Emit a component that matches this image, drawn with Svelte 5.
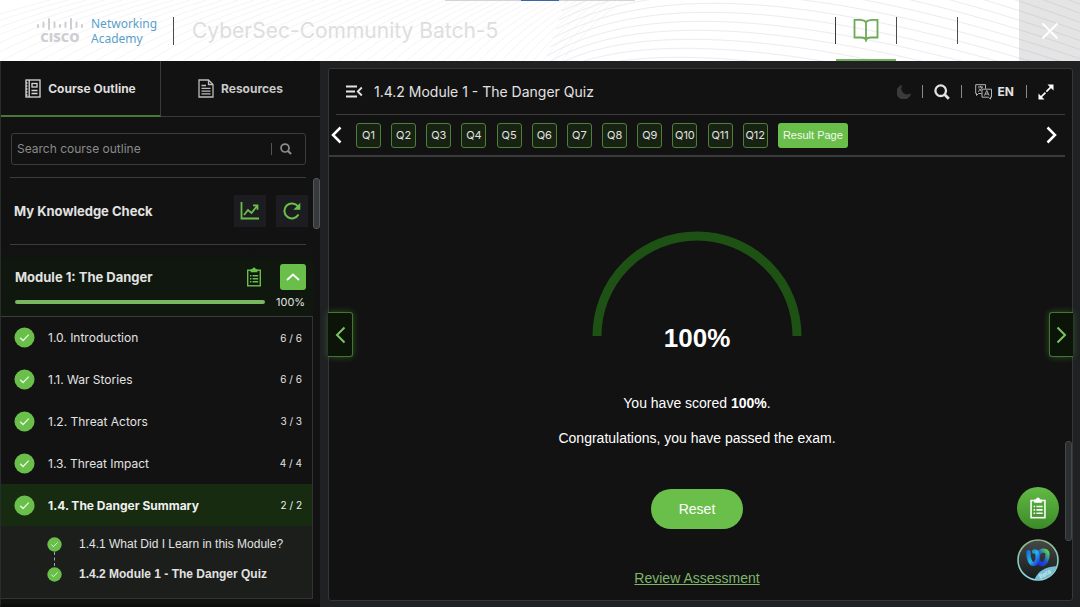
<script>
  const rows = [
    { label: '1.0. Introduction', count: '6 / 6' },
    { label: '1.1. War Stories', count: '6 / 6' },
    { label: '1.2. Threat Actors', count: '3 / 3' },
    { label: '1.3. Threat Impact', count: '4 / 4' },
    { label: '1.4. The Danger Summary', count: '2 / 2', active: true }
  ];
  const topics = [
    { label: '1.4.1 What Did I Learn in this Module?' },
    { label: '1.4.2 Module 1 - The Danger Quiz', active: true }
  ];
  const questions = Array.from({ length: 12 }, (_, i) => `Q${i + 1}`);
  // Decorative contour lines behind the header
  const rising = Array.from({ length: 46 }, (_, i) => {
    const x = -120 + i * 21 - i * i * 0.13;
    return `M${x} 61Q${x + 70 - i} 26 ${x + 170 - i * 2.4} 0`;
  });
  const falling = Array.from({ length: 22 }, (_, i) => {
    const y = 60 - i * 9;
    return `M${535 + i * 3} ${y + 32}C${600 + i * 8} ${y - 18} ${760 + i * 6} ${y - 22} 1090 ${y + 74}`;
  });
</script>

{#snippet check()}
  <svg class="check" viewBox="0 0 22 22" aria-hidden="true">
    <circle cx="11" cy="11" r="10.5" fill="#6abf4b" />
    <path d="M6.5 11.2l3 3 6-6.2" fill="none" stroke="#e9f7e2" stroke-width="1.3" />
  </svg>
{/snippet}

{#snippet clipboard()}
  <svg viewBox="0 0 16 20" aria-hidden="true" fill="none" stroke="currentColor">
    <rect x="1.7" y="3.2" width="12.6" height="15.6" stroke-width="1.4" />
    <path d="M4.5 2.2h1.7a1.8 1.8 0 0 1 3.6 0h1.7v3h-7z" fill="currentColor" stroke="none" />
    <path d="M4 8.7h1.4M6.6 8.7h5.6M4 11.7h1.4M6.6 11.7h5.6M4 14.7h1.4M6.6 14.7h5.6" stroke-width="1.4" />
  </svg>
{/snippet}

{#snippet magnifier()}
  <svg viewBox="0 0 16 16" aria-hidden="true" fill="none" stroke="currentColor">
    <circle cx="6.7" cy="6.7" r="5.3" stroke-width="2.3" />
    <path d="M10.6 10.6l4.2 4.2" stroke-width="2.8" />
  </svg>
{/snippet}

<div class="page">
  <header>
    <svg class="waves" viewBox="0 0 1080 61" preserveAspectRatio="none" aria-hidden="true" fill="none">
      {#each rising as d}<path {d} stroke="#f5f5f7" />{/each}
      {#each falling as d}<path {d} stroke="#ececf1" />{/each}
    </svg>
    <div class="topbar"><span></span></div>
    <div class="brand">
      <div class="cisco">
        <svg viewBox="0 0 48 14" aria-hidden="true" stroke="#cfcfd3" stroke-width="2" stroke-linecap="round">
          <path d="M2 8v2M7.500 5.500v4.500M13 2v10M18.500 5.500v4.500M24 8v2M29.500 5.500v4.500M35 2v10M40.500 5.500v4.500M46 8v2" />
        </svg>
        <b>CISCO</b>
      </div>
      <div class="academy"><div>Networking</div><div>Academy</div></div>
      <i class="rule"></i>
      <h1>CyberSec-Community Batch-5</h1>
    </div>
    <nav class="tools" aria-label="Course tools">
      <a class="book" href="#course" aria-label="Course">
        <svg viewBox="0 0 26 24" fill="none" stroke="#6cab55" stroke-width="1.8" aria-hidden="true">
          <path d="M13 4.200C11.500 2.300 9 1.900 6.500 1.900H1.500v17.600h7c2.500 0 4 .4 4.500 2.200.500-1.800 2-2.200 4.500-2.200h7V1.900h-5C17 1.900 14.500 2.300 13 4.200zV23.500" />
        </svg>
      </a>
      <span class="slot"></span>
      <span class="slot wide"></span>
      <button class="close" aria-label="Close">
        <svg viewBox="0 0 18 18" stroke="#fff" stroke-width="2" aria-hidden="true"><path d="M1.500 1.500l15 15M16.500 1.500l-15 15" /></svg>
      </button>
    </nav>
  </header>

  <div class="body">
    <aside>
      <div class="tabs">
        <button class="tab on">
          <svg viewBox="0 0 16 19" fill="none" stroke="#d8d8d8" stroke-width="1.3" aria-hidden="true">
            <rect x="1" y="1" width="14" height="17" />
            <path d="M4.200 1v17M6.500 11.500h6M6.500 14.500h6M1 4h1.500M1 7h1.500M1 10h1.500M1 13h1.500M1 16h1.500" />
            <rect x="7" y="4.500" width="5" height="3.500" />
          </svg>
          Course Outline
        </button>
        <button class="tab">
          <svg viewBox="0 0 16 19" fill="none" stroke="#bdbdbd" stroke-width="1.3" aria-hidden="true">
            <path d="M1 1h9.500L15 5.500V18H1zM10.500 1v4.500H15M3.500 6.500h4.500M3.500 9.300h9M3.500 12.100h9M3.500 14.900h9" />
          </svg>
          Resources
        </button>
      </div>

      <div class="scroll">
        <div class="search">
          <input type="text" placeholder="Search course outline" aria-label="Search course outline" />
          <i></i>
          <button aria-label="Search">{@render magnifier()}</button>
        </div>

        <div class="knowledge">
          <h2>My Knowledge Check</h2>
          <button aria-label="Progress">
            <svg viewBox="0 0 20 18" fill="none" stroke="#6abf4b" stroke-width="1.8" aria-hidden="true">
              <path d="M1.500 0v16.500H19M4 13l4-5 3.500 3L17 4M13 3.300h4.500v4.500" />
            </svg>
          </button>
          <button aria-label="Refresh">
            <svg viewBox="0 0 20 18" fill="none" stroke="#6abf4b" stroke-width="2" aria-hidden="true">
              <path d="M16.500 12.500A7.500 7.500 0 1 1 16 4.500" />
              <path d="M18.300.8v7h-7z" fill="#6abf4b" stroke="none" />
            </svg>
          </button>
        </div>

        <div class="module">
          <div class="modtitle">
            <h2>Module 1: The Danger</h2>
            <span class="clip">{@render clipboard()}</span>
            <button aria-label="Collapse module">
              <svg viewBox="0 0 14 8" fill="none" stroke="#fff" stroke-width="1.800" aria-hidden="true"><path d="M1 7l6-5.500L13 7" /></svg>
            </button>
          </div>
          <div class="progress"><span></span><em>100%</em></div>
        </div>

        <div class="list">
          {#each rows as row}
            <a class="row" class:active={row.active} href="#section">
              {@render check()}<span>{row.label}</span><em>{row.count}</em>
            </a>
          {/each}
          <div class="topics">
            {#each topics as topic}
              <a class="topic" class:active={topic.active} href="#topic">
                {@render check()}<span>{topic.label}</span>
              </a>
            {/each}
          </div>
        </div>
      </div>
      <div class="thumb side"></div>
    </aside>

    <main>
      <div class="titlebar">
        <button class="fold" aria-label="Hide outline">
          <svg viewBox="0 0 17 13" fill="none" stroke="#e4e4e4" stroke-width="1.800" aria-hidden="true">
            <path d="M0 1.500h11M0 6.500h9M0 11.500h11M15.800 2.500l-4 4 4 4" />
          </svg>
        </button>
        <h2>1.4.2 Module 1 - The Danger Quiz</h2>
        <div class="actions">
          <button aria-label="Dark mode">
            <svg width="14" height="14" viewBox="0 0 14 14" aria-hidden="true"><path d="M4.500.5a7 7 0 1 0 9 8.600A6.500 6.500 0 0 1 4.500.5z" fill="#3b3b3b" stroke="#3b3b3b" /></svg>
          </button>
          <i></i>
          <button class="find" aria-label="Search">{@render magnifier()}</button>
          <i></i>
          <button class="lang">
            <svg width="18" height="16" viewBox="0 0 18 16" fill="none" stroke="#b4b4b4" aria-hidden="true">
              <path d="M6.500 9.500H3.500L1.500 11.500V9.500H.700V.700h9.800v4M7 5.200h9.500v8H15.500v2l-2-2H7z" />
              <path d="M3 3h5M5.500 1.800V3M7 3C6.500 5 5 6.500 3 7.500M4 4.500c.5 1 1.500 2 2.500 2.500M9.500 11.500l2.300-5 2.300 5M10.300 10h3" />
            </svg>
            EN
          </button>
          <i></i>
          <button aria-label="Full screen">
            <svg width="16" height="16" viewBox="0 0 16 16" aria-hidden="true" fill="#fff">
              <path d="M15.500.5v6L9.500.500zM.5 15.500v-6l6 6z" />
              <path d="M2.500 13.500l11-11" stroke="#fff" stroke-width="1.700" stroke-dasharray="7 1.300" />
            </svg>
          </button>
        </div>
      </div>

      <div class="quizbar">
        <button class="step" aria-label="Previous questions">
          <svg viewBox="0 0 11 18" fill="none" stroke="#fff" stroke-width="2.500" aria-hidden="true"><path d="M9.500 1.500L2 9l7.500 7.500" /></svg>
        </button>
        <div class="questions">
          {#each questions as q}<button class="q">{q}</button>{/each}
          <button class="resultpage">Result Page</button>
        </div>
        <button class="step" aria-label="Next questions">
          <svg viewBox="0 0 11 18" fill="none" stroke="#fff" stroke-width="2.500" aria-hidden="true"><path d="M1.500 1.500L9 9l-7.500 7.500" /></svg>
        </button>
      </div>

      <section class="result">
        <svg class="arc" viewBox="0 0 210 105" fill="none" aria-hidden="true">
          <path d="M5 105a100 100 0 0 1 200 0" stroke="#1e5214" stroke-width="9" />
        </svg>
        <strong class="score">100%</strong>
        <p>You have scored <b>100%</b>.</p>
        <p>Congratulations, you have passed the exam.</p>
        <button class="reset">Reset</button>
        <a href="#review">Review Assessment</a>
      </section>

      <button class="pager prev" aria-label="Previous page">
        <svg viewBox="0 0 11 18" fill="none" stroke="#7cc561" stroke-width="2" aria-hidden="true"><path d="M9.500 1.500L2 9l7.500 7.500" /></svg>
      </button>
      <button class="pager next" aria-label="Next page">
        <svg viewBox="0 0 11 18" fill="none" stroke="#7cc561" stroke-width="2" aria-hidden="true"><path d="M1.500 1.500L9 9l-7.500 7.500" /></svg>
      </button>
      <div class="floating">
        <button class="tasks" aria-label="Tasks">{@render clipboard()}</button>
        <button class="webex" aria-label="Webex">
          <svg viewBox="0 0 42 42" aria-hidden="true" fill="none">
            <defs>
              <linearGradient id="rim" x1="0" y1="0" x2="0" y2="1"><stop stop-color="#8fb98a" /><stop offset="1" stop-color="#8fd8e6" /></linearGradient>
              <linearGradient id="disc" x1="0" y1="0" x2="0" y2="1"><stop stop-color="#454947" /><stop offset="1" stop-color="#16191b" /></linearGradient>
              <linearGradient id="wl" x1="0" y1="0" x2="1" y2="1"><stop stop-color="#1674e0" /><stop offset=".5" stop-color="#24b7e8" /><stop offset="1" stop-color="#1b3de0" /></linearGradient>
              <linearGradient id="wr" x1="1" y1="0" x2="0" y2="1"><stop stop-color="#5bd84e" /><stop offset=".5" stop-color="#1c4fe0" /><stop offset="1" stop-color="#1a2bd0" /></linearGradient>
              <clipPath id="round"><circle cx="21" cy="21" r="19.500" /></clipPath>
            </defs>
            <circle cx="21" cy="21" r="20" fill="url(#disc)" stroke="url(#rim)" stroke-width="1.600" />
            <path d="M22 14c2-3 8-3.500 8.500 1 .3 5-2.500 11-6.500 10-2.500-.800-3-4-4-7" stroke="url(#wr)" stroke-width="4.200" stroke-linecap="round" />
            <path d="M11.500 13c-.5 5 1.500 12 5 12 3.500 0 5-6 4-10-.5-2-2-3-3.500-2.500" stroke="url(#wl)" stroke-width="4.200" stroke-linecap="round" />
            <path d="M17 42c3-9 10-14.500 25-15v15z" fill="#79bfd2" clip-path="url(#round)" />
            <text x="28" y="37" font-size="6" font-family="Inter, sans-serif" fill="#dff3f8" text-anchor="middle" transform="rotate(-28 28 35)">Beta</text>
          </svg>
        </button>
      </div>
      <div class="thumb content"></div>
    </main>
  </div>
</div>

<style>
  :global(body) { margin: 0; background: #1c1e20; }
  * { box-sizing: border-box; }
  button { margin: 0; padding: 0; border: 0; background: none; color: inherit; font: inherit; cursor: pointer; }
  a { color: inherit; text-decoration: none; }
  h1, h2, p { margin: 0; font-weight: 400; }
  h2 { font-size: 13px; }
  em { font-style: normal; }
  svg { display: block; }
  .page { min-height: 100vh; display: flex; flex-direction: column; font-family: Inter, "Liberation Sans", sans-serif; font-size: 12px; color: #e2e2e2; }

  header { position: relative; display: flex; justify-content: space-between; height: 61px; background: #fff; }
  .waves { position: absolute; inset: 0; width: 100%; height: 100%; }
  .topbar { position: absolute; top: 0; left: 50%; width: 190px; height: 1px; margin-left: -95px; background: #d4d4d6; }
  .topbar span { display: block; width: 38px; height: 1px; margin: 0 auto; background: #3a66a8; }
  .brand { position: relative; display: flex; align-items: center; padding-left: 36px; }
  .cisco { width: 48px; text-align: center; font: 700 13px/13px "Open Sans", sans-serif; color: #cfcfd3; }
  .cisco svg { width: 48px; height: 14px; }
  .cisco b { display: block; }
  .academy { margin-left: 7px; font: 12px/15px "Noto Sans", sans-serif; color: #5a9fcb; width: 68px; }
  .rule { width: 1px; height: 28px; margin: 0 18px 0 14px; background: #4a4a4c; }
  h1 { font-size: 21px; color: #dedee0; white-space: nowrap; }
  .tools { position: relative; display: flex; align-items: center; }
  .book { display: flex; align-items: center; justify-content: center; align-self: stretch; width: 60px; border-bottom: 2px solid #74b35e; position: relative; }
  .book::before { content: ""; position: absolute; left: -1px; top: 17px; height: 27px; width: 1px; background: #3a3a3a; }
  .book svg { width: 26px; height: 24px; }
  .slot { width: 61px; height: 27px; border-left: 1px solid #4c4c4c; }
  .slot.wide { width: 62px; }
  .close { align-self: stretch; width: 61px; background: rgba(120, 120, 124, 0.2); display: grid; place-items: center; }
  .close svg { width: 18px; height: 18px; }

  .body { flex: 1; display: flex; background: #1f2123; }
  aside { position: relative; width: 320px; flex: none; background: #121212; border-left: 1px solid #2a2c2c; border-bottom: 4px solid #0d0d0e; }
  .tabs { display: flex; height: 56px; }
  .tab { flex: 1; display: flex; align-items: center; justify-content: center; gap: 7px; font-weight: 700; color: #c9c9c9; border-bottom: 1px solid #3a3a3a; }
  .tab.on { color: #dedede; border-right: 1px solid #3a3a3a; border-bottom: 2px solid #497a35; }
  .tab svg { width: 16px; height: 19px; }
  .scroll { padding-right: 7px; }
  .search { display: flex; align-items: center; height: 32px; margin: 16px 7px 0 10px; padding: 0 13px 1px 5px; border: 1px solid #3c3c3c; border-radius: 3px; }
  .search input { flex: 1; min-width: 0; padding: 0; border: 0; outline: 0; background: none; font: inherit; color: #ddd; }
  .search input::placeholder { color: #8a8a8a; opacity: 1; }
  .search i { width: 1px; height: 12px; background: #555; margin-right: 8px; }
  .search button { color: #8c8c8c; }
  .search svg { width: 12px; height: 12px; }
  .knowledge { display: flex; align-items: center; gap: 10px; height: 68px; margin: 12px 7px 0 9px; padding-left: 4px; border-top: 1px solid #3c3c3c; border-bottom: 1px solid #3c3c3c; }
  .knowledge h2 { flex: 1; font-weight: 700; }
  .knowledge button { width: 32px; height: 32px; background: #1d1c20; display: grid; place-items: center; }
  .knowledge button:last-child { margin-right: -2px; }
  .knowledge svg { width: 20px; height: 18px; }
  .module { margin-top: 8px; padding: 10px 7px 0 14px; height: 64px; background: linear-gradient(#121212, #0f170e 8px); border-bottom: 1px solid #3c3c3c; }
  .modtitle { display: flex; align-items: center; height: 28px; }
  .modtitle h2 { flex: 1; font-weight: 700; }
  .clip { color: #6abf4b; margin-right: 18px; }
  .clip :global(svg) { width: 16px; height: 20px; }
  .modtitle button { width: 26px; height: 26px; border-radius: 3px; background: #6abf4b; display: grid; place-items: center; }
  .modtitle button svg { width: 14px; height: 8px; }
  .progress { display: flex; align-items: center; gap: 11px; height: 22px; }
  .progress span { flex: 1; height: 4px; border-radius: 2px; background: #78b85e; }
  .progress em { font-size: 11px; width: 30px; }
  .list { border-right: 1px solid #333; border-bottom: 1px solid #333; }
  .row { display: flex; align-items: center; gap: 13px; height: 42px; padding: 0 10px 0 13px; }
  .row:first-child { height: 41px; }
  .row span { flex: 1; }
  .row em { font-size: 10px; }
  .row.active { background: #172b10; color: #f0f0f0; }
  .row.active span { font-weight: 700; }
  .check { width: 21px; height: 21px; flex: none; }
  .topics { background: #1b1e1b; padding: 3px 0 9px; }
  .topic { position: relative; display: flex; align-items: center; gap: 17px; height: 30px; padding-left: 46px; font-family: "Liberation Sans", Arial, sans-serif; }
  .topic .check { width: 15px; height: 15px; }
  .topic.active { font-weight: 700; }
  .topic.active::before { content: ""; position: absolute; left: 53px; top: -7px; height: 14px; border-left: 1px dashed #a5a5a5; }
  .thumb { position: absolute; width: 7px; border: 1px solid #55585a; border-radius: 3px; background: #38393b; }
  .thumb.side { right: 0; top: 117px; height: 51px; }
  .thumb.content { right: 0; top: 372px; height: 100px; background: #2c2f31; border-color: #45484a; }

  main { position: relative; flex: 1; min-width: 0; margin: 7px 7px 7px 8px; background: #121212; border: 1px solid #343638; border-radius: 3px; }
  .titlebar { display: flex; align-items: center; height: 46px; margin: 0 7px; padding: 0 11px 0 10px; border-bottom: 1px solid #3c3c3c; }
  .fold svg { width: 17px; height: 13px; }
  .titlebar h2 { flex: 1; margin-left: 11px; font-size: 14px; }
  .actions { display: flex; align-items: center; gap: 11px; }
  .actions i { width: 1px; height: 13px; background: #8a8a8a; }
  .find :global(svg) { width: 16px; height: 16px; }
  .lang { display: flex; align-items: center; gap: 5px; margin: 0 1px 0 2px; font-weight: 700; }
  .quizbar { display: flex; align-items: center; height: 42px; margin-right: 7px; padding: 0 8px 0 2px; border-bottom: 2px solid #3a3a3a; }
  .step svg { width: 11px; height: 18px; }
  .questions { display: flex; flex: 1; max-width: 492px; margin: 0 auto 0 14px; justify-content: space-between; }
  .q { width: 25px; height: 25px; border: 1px solid #4d8038; border-radius: 3px; background: #172212; font-size: 11px; }
  .resultpage { width: 70px; height: 25px; border-radius: 3px; background: #6abf4b; color: #f3f8f0; font-family: "Liberation Sans", Arial, sans-serif; font-size: 11px; white-space: nowrap; }
  .result { display: flex; flex-direction: column; align-items: center; padding: 74px 7px 12px 0; font: 14px/20px "Liberation Sans", Arial, sans-serif; color: #fff; }
  .arc { width: 210px; height: 105px; }
  .score { margin: -13px 0 40px; font-size: 26px; line-height: 30px; }
  .result p { margin-bottom: 15px; }
  .reset { width: 92px; height: 40px; margin: 26px 0 39px; border-radius: 20px; background: #6abf4b; color: #fff; }
  .result a { color: #7fb56a; text-decoration: underline; }
  .pager { position: absolute; top: 243px; width: 25px; height: 45px; display: grid; place-items: center; background: #0c140a; border: 1px solid #3d7a2c; box-shadow: 0 0 7px rgba(106, 191, 75, 0.35); }
  .pager svg { width: 11px; height: 18px; }
  .prev { left: -1px; border-left: 0; border-radius: 0 3px 3px 0; }
  .next { right: -1px; width: 24px; border-right: 0; border-radius: 3px 0 0 3px; }
  .floating { position: absolute; right: 13px; bottom: 19px; display: flex; flex-direction: column; gap: 10px; }
  .floating button { width: 42px; height: 42px; border-radius: 50%; }
  .tasks { display: grid; place-items: center; background: linear-gradient(#62ba45, #3c8a28); color: #fff; }
  .tasks :global(svg) { width: 18px; height: 22px; }
</style>
